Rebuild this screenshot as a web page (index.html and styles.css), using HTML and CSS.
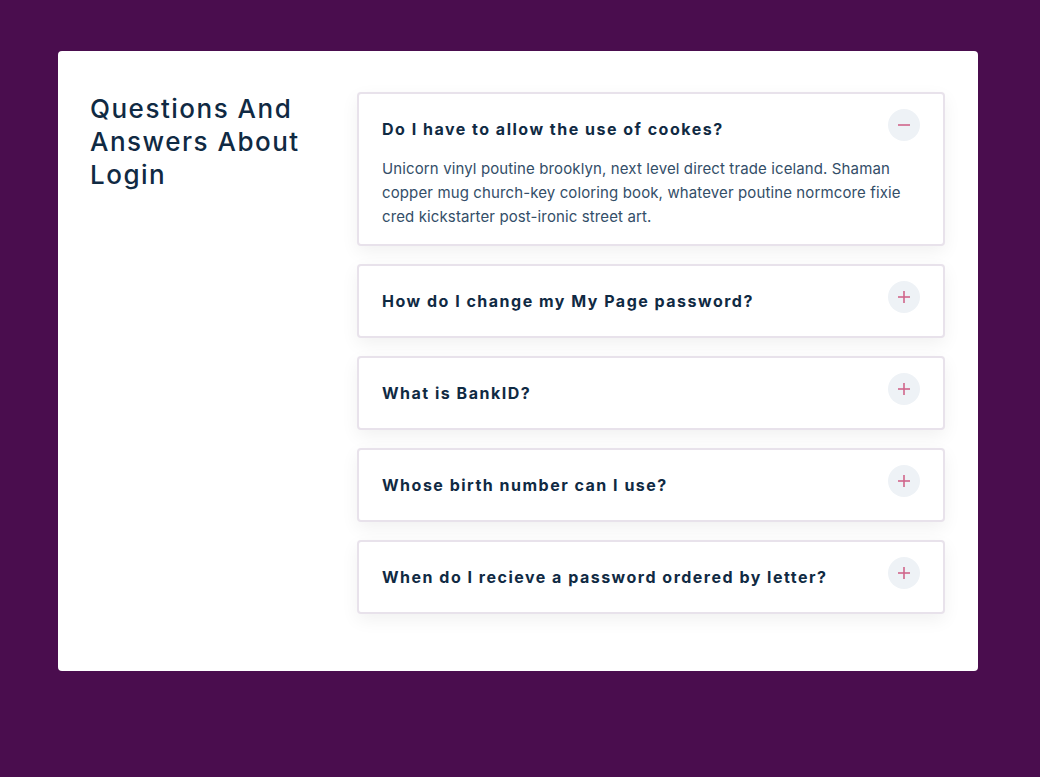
FILE: index.html
```html
<!DOCTYPE html>
<html lang="en">
<head>
<meta charset="utf-8">
<title>FAQ</title>
<link rel="stylesheet" href="styles.css">
</head>
<body>
<main class="card">
  <h2 class="title">Questions And Answers About Login</h2>
  <div class="faq">
    <div class="item open">
      <div class="question">Do I have to allow the use of cookes?</div>
      <span class="toggle"><svg width="12" height="12" viewBox="0 0 12 12"><line x1="0" y1="6" x2="12" y2="6"/></svg></span>
      <p class="answer">Unicorn vinyl poutine brooklyn, next level direct trade iceland. Shaman copper mug church-key coloring book, whatever poutine normcore fixie cred kickstarter post-ironic street art.</p>
    </div>
    <div class="item">
      <div class="question">How do I change my My Page password?</div>
      <span class="toggle"><svg width="12" height="12" viewBox="0 0 12 12"><line x1="0" y1="6" x2="12" y2="6"/><line x1="6" y1="0" x2="6" y2="12"/></svg></span>
    </div>
    <div class="item">
      <div class="question">What is BankID?</div>
      <span class="toggle"><svg width="12" height="12" viewBox="0 0 12 12"><line x1="0" y1="6" x2="12" y2="6"/><line x1="6" y1="0" x2="6" y2="12"/></svg></span>
    </div>
    <div class="item">
      <div class="question">Whose birth number can I use?</div>
      <span class="toggle"><svg width="12" height="12" viewBox="0 0 12 12"><line x1="0" y1="6" x2="12" y2="6"/><line x1="6" y1="0" x2="6" y2="12"/></svg></span>
    </div>
    <div class="item">
      <div class="question">When do I recieve a password ordered by letter?</div>
      <span class="toggle"><svg width="12" height="12" viewBox="0 0 12 12"><line x1="0" y1="6" x2="12" y2="6"/><line x1="6" y1="0" x2="6" y2="12"/></svg></span>
    </div>
  </div>
</main>
</body>
</html>
```
FILE: styles.css
```css
* { box-sizing: border-box; }
html, body { margin: 0; padding: 0; }
body {
  background: #4a0d4e;
  font-family: Inter, "Liberation Sans", sans-serif;
  padding: 51px 0 0 58px;
  min-height: 777px;
}
.card {
  width: 920px;
  height: 620px;
  background: #ffffff;
  border-radius: 4px;
  padding: 41px 33px 40px 32px;
  display: grid;
  grid-template-columns: 235px 1fr;
  column-gap: 32px;
  align-items: start;
}
.title {
  margin: 0;
  font-size: 26px;
  line-height: 33px;
  font-weight: 500;
  letter-spacing: 1.5px;
  color: #102a43;
}
.faq {
  display: flex;
  flex-direction: column;
  gap: 18px;
}
.item {
  position: relative;
  background: #fff;
  border: 2px solid #e8e2eb;
  border-radius: 4px;
  padding: 23px 23px;
  box-shadow: 0 6px 18px rgba(0, 0, 0, 0.06);
}
.item.open { padding-bottom: 15px; }
.question {
  font-size: 16px;
  line-height: 24px;
  font-weight: 700;
  letter-spacing: 1.5px;
  color: #102a43;
}
.toggle {
  position: absolute;
  top: 15px;
  right: 23px;
  width: 32px;
  height: 32px;
  border-radius: 50%;
  background: #eef2f6;
  display: flex;
  align-items: center;
  justify-content: center;
}
.toggle svg line {
  stroke: #d0658b;
  stroke-width: 1.6;
}
.answer {
  margin: 16px 0 0;
  font-size: 15px;
  line-height: 24px;
  letter-spacing: 0.12px;
  color: #334e68;
}
```
